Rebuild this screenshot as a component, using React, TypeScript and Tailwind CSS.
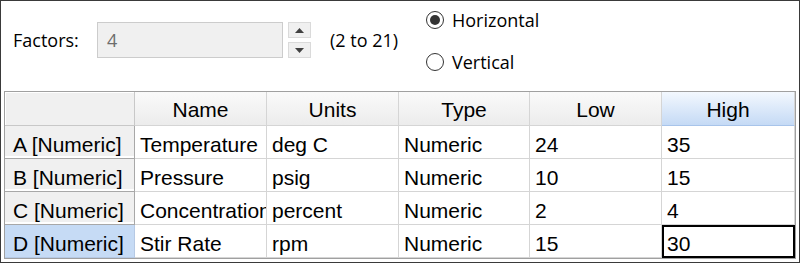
import { useState } from "react";

const COLS = ["Name", "Units", "Type", "Low", "High"];

const ROWS = [
  { id: "A [Numeric]", cells: ["Temperature", "deg C", "Numeric", "24", "35"] },
  { id: "B [Numeric]", cells: ["Pressure", "psig", "Numeric", "10", "15"] },
  { id: "C [Numeric]", cells: ["Concentration", "percent", "Numeric", "2", "4"] },
  { id: "D [Numeric]", cells: ["Stir Rate", "rpm", "Numeric", "15", "30"] },
];

const uiFont = { fontFamily: '"Open Sans", "Noto Sans", sans-serif' };
const gridFont = { fontFamily: '"Liberation Sans", Arial, sans-serif' };

function Radio({ checked, label, onClick }: { checked: boolean; label: string; onClick: () => void }) {
  return (
    <button onClick={onClick} className="flex items-center gap-[8px] h-[26px] text-[18px] text-black">
      <span className="w-[18px] h-[18px] rounded-full border-[1.5px] border-[#333] flex items-center justify-center bg-white">
        {checked && <span className="w-[10px] h-[10px] rounded-full bg-[#333]" />}
      </span>
      <span>{label}</span>
    </button>
  );
}

export default function App() {
  const [orient, setOrient] = useState("h");
  const selCol = 4;
  const selRow = 3;

  return (
    <div className="w-[800px] h-[263px] bg-white border border-[#3a3a3a] flex flex-col overflow-hidden">
      {/* top controls */}
      <div className="h-[90px] flex items-start" style={uiFont}>
        <div className="flex items-center h-[36px] mt-[21px] pl-[12px]">
          <span className="w-[84px] text-[18px] text-black">Factors:</span>
          <div className="w-[186px] h-[36px] bg-[#f0f0f0] border border-[#cccccc] flex items-center pl-[9px] text-[18px] text-[#6d6d6d]">
            4
          </div>
          <div className="ml-[5px] w-[23px] h-[36px] flex flex-col justify-between">
            <div className="h-[16px] bg-[#f0f0f0] border border-[#dadada] flex items-center justify-center">
              <svg width="9" height="5" viewBox="0 0 9 5"><path d="M0 5 L4.5 0 L9 5 Z" fill="#404040" /></svg>
            </div>
            <div className="h-[16px] bg-[#f0f0f0] border border-[#dadada] flex items-center justify-center">
              <svg width="9" height="5" viewBox="0 0 9 5"><path d="M0 0 L4.5 5 L9 0 Z" fill="#404040" /></svg>
            </div>
          </div>
          <span className="ml-[19px] w-[96px] text-[18px] text-black">(2 to 21)</span>
        </div>
        <div className="flex flex-col gap-[16px] pt-[6px]">
          <Radio checked={orient === "h"} label="Horizontal" onClick={() => setOrient("h")} />
          <Radio checked={orient === "v"} label="Vertical" onClick={() => setOrient("v")} />
        </div>
      </div>

      {/* factor grid */}
      <div className="mx-[3px] border border-[#a0a0a0] bg-white" style={gridFont}>
        <div className="grid grid-cols-[130px_132px_132px_131px_132px_1fr] text-[21px] text-black">
          <div className="h-[34px] bg-[#f0f0f0] border-r border-b border-[#c8c8c8] shadow-[inset_1px_1px_0_#ffffff]" />
          {COLS.map((c, i) => (
            <div
              key={c}
              className={
                "h-[34px] flex items-center justify-center pt-[3px] border-b border-r border-[#d5d5d5] " +
                (i === selCol
                  ? "bg-gradient-to-b from-[#f3f8fe] to-[#c5daf5] border-b-[#a8c4ea]"
                  : "bg-gradient-to-b from-[#fafafa] to-[#ececec]")
              }
            >
              {c}
            </div>
          ))}
          {ROWS.map((r, ri) => (
            <>
              <div
                key={r.id}
                className={
                  "h-[33px] flex items-center pl-[8px] pt-[5px] border-r border-b whitespace-nowrap overflow-hidden " +
                  (ri === selRow
                    ? "bg-[#c6dbf5] border-[#b6c9e4]"
                    : "bg-[#f0f0f0] border-[#a8a8a8] shadow-[inset_0_-2px_0_#ffffff]")
                }
              >
                {r.id}
              </div>
              {r.cells.map((v, ci) => (
                <div
                  key={r.id + ci}
                  className={
                    "h-[33px] flex items-center pt-[5px] overflow-hidden whitespace-nowrap " +
                    (ri === selRow && ci === selCol
                      ? "border-2 border-black pl-[3px]"
                      : "border-r border-b border-[#d5d5d5] pl-[5px]")
                  }
                >
                  {v}
                </div>
              ))}
            </>
          ))}
        </div>
      </div>
    </div>
  );
}
